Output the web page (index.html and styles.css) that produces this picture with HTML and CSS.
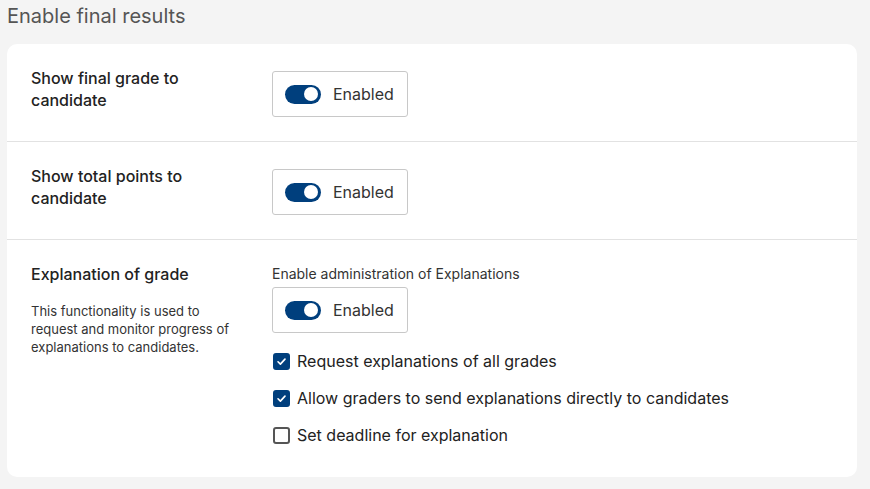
FILE: index.html
```html
<!DOCTYPE html>
<html>
<head>
  <title>Enable final results</title>
  <link rel="stylesheet" href="styles.css">
</head>
<body>
  <h2 class="page-title">Enable final results</h2>

  <div class="card">
    <!-- Final grade -->
    <div class="setting">
      <div class="setting-label">
        <h3>Show final grade to candidate</h3>
      </div>
      <div class="setting-control">
        <label class="toggle-box">
          <span class="toggle on"><span class="knob"></span></span>
          <span class="toggle-text">Enabled</span>
        </label>
      </div>
    </div>

    <!-- Total points -->
    <div class="setting">
      <div class="setting-label">
        <h3>Show total points to candidate</h3>
      </div>
      <div class="setting-control">
        <label class="toggle-box">
          <span class="toggle on"><span class="knob"></span></span>
          <span class="toggle-text">Enabled</span>
        </label>
      </div>
    </div>

    <!-- Explanations -->
    <div class="setting last">
      <div class="setting-label">
        <h3>Explanation of grade</h3>
        <p class="description">This functionality is used to request and monitor progress of explanations to candidates.</p>
      </div>
      <div class="setting-control">
        <div class="small-label">Enable administration of Explanations</div>
        <label class="toggle-box">
          <span class="toggle on"><span class="knob"></span></span>
          <span class="toggle-text">Enabled</span>
        </label>
        <ul class="checks">
          <li>
            <span class="checkbox checked">
              <svg viewBox="0 0 12 12" width="11" height="11"><path d="M2.2 6.3 L4.8 8.8 L9.8 3.4" fill="none" stroke="#fff" stroke-width="1.8" stroke-linecap="round" stroke-linejoin="round"/></svg>
            </span>
            Request explanations of all grades
          </li>
          <li>
            <span class="checkbox checked">
              <svg viewBox="0 0 12 12" width="11" height="11"><path d="M2.2 6.3 L4.8 8.8 L9.8 3.4" fill="none" stroke="#fff" stroke-width="1.8" stroke-linecap="round" stroke-linejoin="round"/></svg>
            </span>
            Allow graders to send explanations directly to candidates
          </li>
          <li>
            <span class="checkbox"></span>
            Set deadline for explanation
          </li>
        </ul>
      </div>
    </div>
  </div>
</body>
</html>
```

FILE: styles.css
```css
body {
  margin: 0;
  background-color: #f4f4f4;
  font-family: Inter, "Noto Sans", sans-serif;
  color: #222222;
}

.page-title {
  margin: 0;
  padding: 4px 0 0 7px;
  height: 44px;
  box-sizing: border-box;
  font-size: 20px;
  font-weight: 400;
  line-height: 24px;
  color: #555555;
}

.card {
  margin: 0 13px 0 7px;
  background-color: #ffffff;
  border-radius: 10px;
}

/* One row of settings */
.setting {
  display: grid;
  grid-template-columns: 217px 1fr;
  column-gap: 24px;
  padding: 23px 24px 24px;
  border-bottom: 1px solid #e2e2e2;
}

.setting.last {
  border-bottom: none;
  padding-bottom: 31px;
}

.setting-label h3 {
  margin: 0;
  max-width: 205px;
  font-size: 16px;
  font-weight: 500;
  line-height: 22px;
  color: #222222;
}

.description {
  margin: 17px 0 0;
  max-width: 206px;
  font-size: 13px;
  line-height: 18px;
  color: #333333;
}

.setting-control {
  padding-top: 4px;
}

.small-label {
  margin-top: -2px;
  margin-bottom: 4px;
  font-size: 14px;
  line-height: 18px;
  color: #333333;
}

/* Toggle */
.toggle-box {
  display: inline-flex;
  align-items: center;
  gap: 12px;
  height: 46px;
  box-sizing: border-box;
  padding: 0 13px 0 12px;
  border: 1px solid #c8c8c8;
  border-radius: 3px;
  background-color: #ffffff;
}

.toggle {
  position: relative;
  width: 36px;
  height: 19px;
  border-radius: 10px;
  background-color: #bbbbbb;
}

.toggle.on {
  background-color: #003f7d;
}

.knob {
  position: absolute;
  top: 2.5px;
  left: 3px;
  width: 14px;
  height: 14px;
  border-radius: 50%;
  background-color: #ffffff;
}

.toggle.on .knob {
  left: 19px;
}

.toggle-text {
  font-size: 16px;
  color: #333333;
}

/* Checkboxes */
.checks {
  list-style: none;
  margin: 17px 0 0;
  padding: 0;
}

.checks li {
  display: flex;
  align-items: center;
  gap: 7px;
  font-size: 16px;
  line-height: 22px;
  color: #222222;
}

.checks li + li {
  margin-top: 15px;
}

.checkbox {
  display: inline-flex;
  align-items: center;
  justify-content: center;
  width: 17px;
  height: 17px;
  box-sizing: border-box;
  margin-left: 1px;
  border: 2px solid #555555;
  border-radius: 3px;
}

.checkbox.checked {
  border-color: #003f7d;
  background-color: #003f7d;
}
```
